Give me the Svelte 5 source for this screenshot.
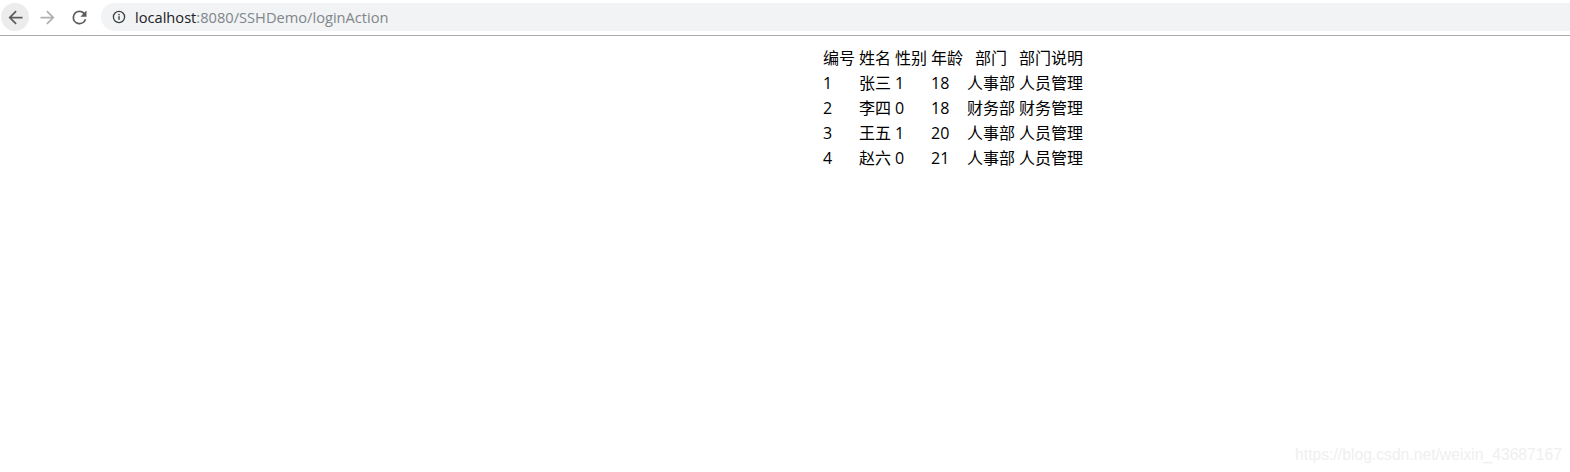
<script>
	const head = ['编号', '姓名', '性别', '年龄', '部门', '部门说明'];

	const rows = [
		[1, '张三', 1, 18, '人事部', '人员管理'],
		[2, '李四', 0, 18, '财务部', '财务管理'],
		[3, '王五', 1, 20, '人事部', '人员管理'],
		[4, '赵六', 0, 21, '人事部', '人员管理']
	];
</script>

<header class="toolbar">
	<button class="nav back" aria-label="Back">
		<svg viewBox="0 0 24 24"><path d="M20 11H7.83l5.59-5.59L12 4l-8 8 8 8 1.41-1.41L7.83 13H20v-2z" /></svg>
	</button>
	<button class="nav forward" aria-label="Forward">
		<svg viewBox="0 0 24 24"><path d="M12 4l-1.41 1.41L16.17 11H4v2h12.17l-5.58 5.59L12 20l8-8z" /></svg>
	</button>
	<button class="nav reload" aria-label="Reload">
		<svg viewBox="0 0 24 24"><path d="M17.65 6.35A7.96 7.96 0 0 0 12 4a8 8 0 1 0 7.75 10h-2.08A6 6 0 1 1 12 6c1.66 0 3.14.69 4.22 1.78L13 11h7V4l-2.35 2.35z" /></svg>
	</button>
	<div class="omnibox">
		<svg class="info" viewBox="0 0 16 16" width="16" height="16">
			<circle cx="8" cy="8" r="5.6" fill="none" stroke="#3c4043" stroke-width="1.3" />
			<rect x="7.3" y="7.2" width="1.4" height="3.6" fill="#3c4043" />
			<rect x="7.3" y="4.9" width="1.4" height="1.4" fill="#3c4043" />
		</svg>
		<span class="host">localhost</span><span class="path">:8080/SSHDemo/loginAction</span>
	</div>
</header>

<main>
	<table>
		<thead>
			<tr>
				{#each head as h}
					<th>{h}</th>
				{/each}
			</tr>
		</thead>
		<tbody>
			{#each rows as row}
				<tr>
					{#each row as cell}
						<td>{cell}</td>
					{/each}
				</tr>
			{/each}
		</tbody>
	</table>
</main>

<div class="watermark">https://blog.csdn.net/weixin_43687167</div>

<style>
	:global(body) {
		margin: 0;
		background: #fff;
		font-family: "Open Sans", "Noto Sans CJK SC", sans-serif;
		overflow: hidden;
	}

	.toolbar {
		display: flex;
		align-items: flex-start;
		height: 32px;
		padding: 3px 0 0 1px;
		border-bottom: 1px solid #ababab;
		background: #fff;
	}

	.nav {
		display: flex;
		align-items: center;
		justify-content: center;
		width: 28px;
		height: 28px;
		margin-right: 4px;
		padding: 0;
		border: 0;
		border-radius: 50%;
		background: transparent;
	}

	.nav svg {
		width: 21px;
		height: 21px;
		fill: #5a5d60;
	}

	.back {
		background: #ececec;
	}

	.forward svg {
		fill: #aeb0b3;
	}

	.omnibox {
		display: flex;
		align-items: center;
		flex: 1;
		height: 28px;
		margin-left: 4px;
		padding-left: 10px;
		border-radius: 14px 0 0 14px;
		background: #f1f3f4;
		font-size: 14.65px;
		white-space: nowrap;
	}

	.info {
		margin-right: 8px;
	}

	.host {
		color: #202124;
	}

	.path {
		color: #80868b;
	}

	main {
		padding: 9px 0 0 820px;
	}

	table {
		border-collapse: separate;
		border-spacing: 2px;
		font-size: 16px;
		line-height: 21px;
		color: #000;
	}

	th,
	td {
		padding: 1px;
		text-align: left;
		white-space: nowrap;
	}

	th {
		font-weight: 400;
		text-align: center;
	}

	.watermark {
		position: absolute;
		right: 8px;
		bottom: 8px;
		font-family: "Liberation Sans", Arial, sans-serif;
		font-size: 15.7px;
		color: #efefef;
	}
</style>
